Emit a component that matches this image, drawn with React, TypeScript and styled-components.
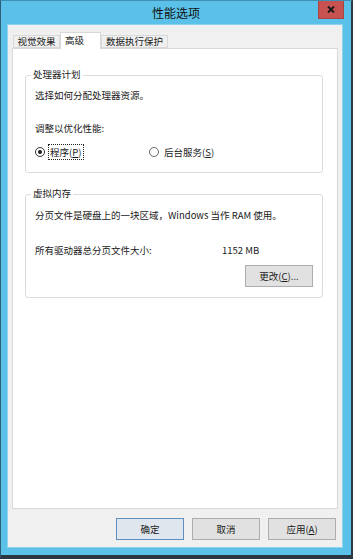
import styled, { createGlobalStyle } from 'styled-components';

const GlobalStyle = createGlobalStyle`
  html, body {
    margin: 0;
    padding: 0;
    background: #ffffff;
  }
  * {
    box-sizing: border-box;
  }
`;

const Frame = styled.div`
  width: 353px;
  height: 559px;
  display: flex;
  flex-direction: column;
  background: #5bc1e8;
  border-top: 1px solid #3f8fb5;
  border-left: 1px solid #2f5f78;
  border-right: 2px solid #2e3a44;
  border-bottom: 4px solid #2c3640;
  padding: 0 9px 8px 7px;
  font-family: 'Noto Sans CJK SC', 'Microsoft YaHei', sans-serif;
  color: #1a1a1a;
`;

const TitleBar = styled.div`
  height: 24px;
  margin: 0 -9px 0 -7px;
  display: grid;
  grid-template-columns: 1fr auto 1fr;
  align-items: start;
`;

const Title = styled.div`
  grid-column: 2;
  font-size: 12px;
  line-height: 24px;
  color: #111;
`;

const CloseButton = styled.div`
  grid-column: 3;
  justify-self: end;
  width: 26px;
  height: 18px;
  margin-right: 7px;
  background: #c85250;
  border: 1px solid #a84443;
  border-top: none;
  display: flex;
  align-items: center;
  justify-content: center;
`;

const Content = styled.div`
  flex: 1;
  display: flex;
  flex-direction: column;
  background: #f0f0f0;
  box-shadow: 0 0 0 1px #8fd3f0;
  padding: 7px 4px 7px 4px;
`;

const TabStrip = styled.div`
  display: flex;
  align-items: flex-end;
  height: 16px;
  padding-left: 1px;
`;

const Tab = styled.div<{ $active?: boolean; $w: number }>`
  position: relative;
  z-index: ${(p) => (p.$active ? 1 : 0)};
  width: ${(p) => p.$w}px;
  height: ${(p) => (p.$active ? 17 : 13)}px;
  margin-bottom: ${(p) => (p.$active ? -1 : 0)}px;
  background: ${(p) => (p.$active ? '#ffffff' : '#f0f0f0')};
  border: 1px solid #d9d9d9;
  border-bottom: ${(p) => (p.$active ? 'none' : '1px solid #d9d9d9')};
  font-size: 9.5px;
  line-height: ${(p) => (p.$active ? 14 : 11)}px;
  text-align: ${(p) => (p.$active ? 'left' : 'center')};
  padding-left: ${(p) => (p.$active ? 4 : 0)}px;
  white-space: nowrap;
`;

const Panel = styled.div`
  flex: 1;
  background: #ffffff;
  border: 1px solid #d9d9d9;
  padding: 26px 14px 0 12px;
  display: flex;
  flex-direction: column;
`;

const Group = styled.div<{ $gap?: number }>`
  margin-top: ${(p) => p.$gap ?? 0}px;
  border: 1px solid #dcdcdc;
  border-radius: 3px;
  padding: 0 9px 10px 9px;
  display: flex;
  flex-direction: column;
`;

const Caption = styled.div`
  align-self: flex-start;
  margin: -8px 0 0 -4px;
  padding: 0 2px;
  background: #ffffff;
  font-size: 9.5px;
  line-height: 12px;
`;

const Line = styled.div<{ $top: number }>`
  margin-top: ${(p) => p.$top}px;
  font-size: 9.5px;
  line-height: 12px;
  white-space: nowrap;
`;

const RadioRow = styled.div`
  margin-top: 10px;
  margin-bottom: 2px;
  display: grid;
  grid-template-columns: 114px auto;
  align-items: center;
  height: 16px;
`;

const RadioOption = styled.div`
  display: flex;
  align-items: center;
  gap: 3px;
`;

const RadioCircle = styled.span<{ $checked?: boolean }>`
  width: 10px;
  height: 10px;
  border-radius: 50%;
  border: 1px solid ${(p) => (p.$checked ? '#333' : '#6a6a6a')};
  background: #ffffff;
  display: flex;
  align-items: center;
  justify-content: center;
  &::after {
    content: '';
    width: 4px;
    height: 4px;
    border-radius: 50%;
    background: ${(p) => (p.$checked ? '#1a1a1a' : 'transparent')};
  }
`;

const RadioLabel = styled.span<{ $focused?: boolean }>`
  font-size: 9.5px;
  line-height: 12px;
  padding: 1px 2px 1px 1px;
  white-space: nowrap;
  border: 1px dotted ${(p) => (p.$focused ? '#222' : 'transparent')};
`;

const Key = styled.span`
  text-decoration: underline;
`;

const SizeRow = styled.div`
  margin-top: 23px;
  display: grid;
  grid-template-columns: 187px auto;
  font-size: 9.5px;
  line-height: 12px;
`;

const Button = styled.div<{ $default?: boolean }>`
  width: 68px;
  height: 22px;
  border: 1px solid ${(p) => (p.$default ? '#5f8fbf' : '#adadad')};
  background: ${(p) => (p.$default ? '#dfe6ee' : '#e1e1e1')};
  font-size: 9.5px;
  display: flex;
  align-items: center;
  justify-content: center;
  white-space: nowrap;
`;

const GroupButton = styled(Button)`
  align-self: flex-end;
  margin-top: 9px;
`;

const ButtonRow = styled.div`
  margin-top: 9px;
  padding-right: 2px;
  display: flex;
  justify-content: flex-end;
  gap: 8px;
`;

export default function App() {
  return (
    <>
      <GlobalStyle />
      <Frame>
        <TitleBar>
          <Title>性能选项</Title>
          <CloseButton>
            <svg width="8" height="7" viewBox="0 0 8 7">
              <path d="M1 0.5 L7 6.5 M7 0.5 L1 6.5" stroke="#1a1a1a" strokeWidth="2" />
            </svg>
          </CloseButton>
        </TitleBar>
        <Content>
          <TabStrip>
            <Tab $w={47}>视觉效果</Tab>
            <Tab $w={41} $active>高级</Tab>
            <Tab $w={67}>数据执行保护</Tab>
          </TabStrip>
          <Panel>
            <Group>
              <Caption>处理器计划</Caption>
              <Line $top={9}>选择如何分配处理器资源。</Line>
              <Line $top={21}>调整以优化性能:</Line>
              <RadioRow>
                <RadioOption>
                  <RadioCircle $checked />
                  <RadioLabel $focused>
                    程序(<Key>P</Key>)
                  </RadioLabel>
                </RadioOption>
                <RadioOption>
                  <RadioCircle />
                  <RadioLabel>
                    后台服务(<Key>S</Key>)
                  </RadioLabel>
                </RadioOption>
              </RadioRow>
            </Group>
            <Group $gap={21}>
              <Caption>虚拟内存</Caption>
              <Line $top={10}>分页文件是硬盘上的一块区域，Windows 当作 RAM 使用。</Line>
              <SizeRow>
                <span>所有驱动器总分页文件大小:</span>
                <span>1152 MB</span>
              </SizeRow>
              <GroupButton>
                更改(<Key>C</Key>)...
              </GroupButton>
            </Group>
          </Panel>
          <ButtonRow>
            <Button $default>确定</Button>
            <Button>取消</Button>
            <Button>
              应用(<Key>A</Key>)
            </Button>
          </ButtonRow>
        </Content>
      </Frame>
    </>
  );
}
